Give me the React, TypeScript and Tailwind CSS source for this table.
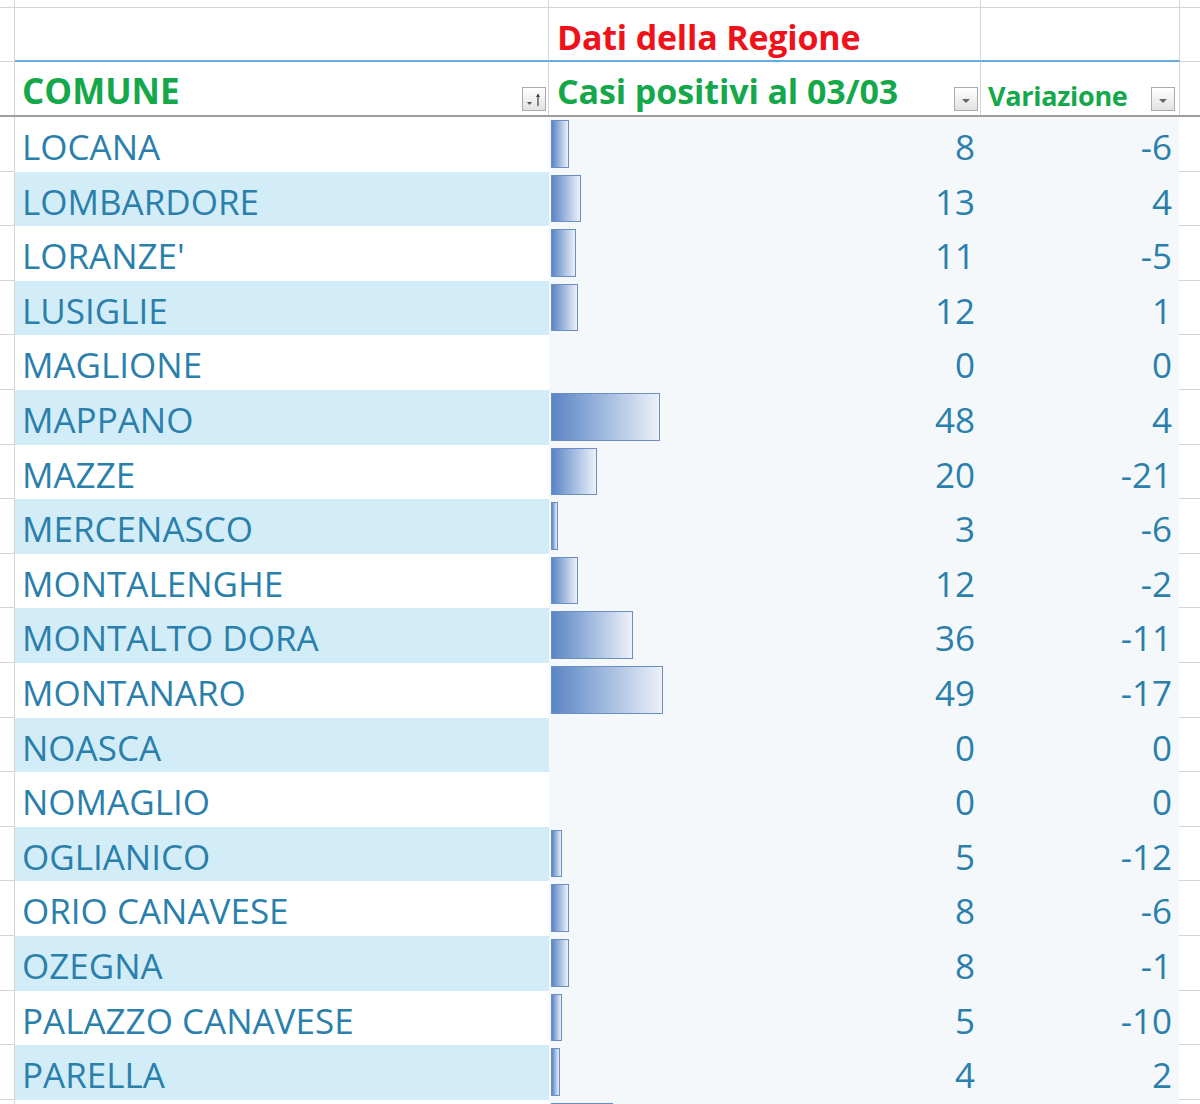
import React from "react";

type Row = [string, number, number];

const rows: Row[] = [
  ["LOCANA", 8, -6],
  ["LOMBARDORE", 13, 4],
  ["LORANZE'", 11, -5],
  ["LUSIGLIE", 12, 1],
  ["MAGLIONE", 0, 0],
  ["MAPPANO", 48, 4],
  ["MAZZE", 20, -21],
  ["MERCENASCO", 3, -6],
  ["MONTALENGHE", 12, -2],
  ["MONTALTO DORA", 36, -11],
  ["MONTANARO", 49, -17],
  ["NOASCA", 0, 0],
  ["NOMAGLIO", 0, 0],
  ["OGLIANICO", 5, -12],
  ["ORIO CANAVESE", 8, -6],
  ["OZEGNA", 8, -1],
  ["PALAZZO CANAVESE", 5, -10],
  ["PARELLA", 4, 2],
];

function FilterBtn({ sort }: { sort?: boolean }) {
  return (
    <div className="w-[24px] h-[24px] border border-[#ababab] bg-linear-to-b from-white to-[#e2e2e2] flex items-center justify-center">
      {sort ? (
        <svg width="22" height="22" viewBox="0 0 22 22">
          <polygon points="4,14 9,14 6.5,17" fill="#555" />
          <line x1="15" y1="6.5" x2="15" y2="18" stroke="#444" strokeWidth="1.2" />
          <polygon points="13,9 15,5.5 17,9" fill="#444" />
        </svg>
      ) : (
        <svg width="22" height="22" viewBox="0 0 22 22">
          <polygon points="7,11 15,11 11,15" fill="#666" />
        </svg>
      )}
    </div>
  );
}

export default function App() {
  return (
    <div className="w-[1200px] h-[1104px] overflow-hidden bg-white font-['Open_Sans',sans-serif] text-[#2a7fab]">
      {/* top partial row */}
      <div className="flex h-[8px]">
        <div className="w-[15px] border-r border-b border-[#d4d4d4]" />
        <div className="w-[534px] border-r border-b border-[#d4d4d4]" />
        <div className="w-[432px] border-r border-b border-[#d4d4d4]" />
        <div className="w-[199px] border-r border-b border-[#d4d4d4]" />
        <div className="flex-1 border-b border-[#d4d4d4]" />
      </div>

      {/* Dati della Regione */}
      <div className="flex h-[54px]">
        <div className="w-[15px] border-r border-b border-[#d4d4d4]" />
        <div className="w-[534px] border-r border-[#d4d4d4] border-b-2 border-b-[#67abdf]" />
        <div className="w-[432px] border-r border-[#d4d4d4] border-b-2 border-b-[#67abdf] pl-[8px] pt-[12px]">
          <div className="text-[34px] leading-none font-bold text-[#f0121a] whitespace-nowrap tracking-[-0.2px]">
            Dati della Regione
          </div>
        </div>
        <div className="w-[199px] border-r border-[#d4d4d4] border-b-2 border-b-[#67abdf]" />
        <div className="flex-1 border-b border-[#d4d4d4]" />
      </div>

      {/* headers */}
      <div className="flex h-[55px] border-b-2 border-[#9e9e9e]">
        <div className="w-[15px] border-r border-[#d4d4d4]" />
        <div className="w-[534px] border-r border-[#d4d4d4] flex justify-between pl-[7px] pr-[2px]">
          <div className="pt-[11px] text-[35px] leading-none font-bold text-[#14a84b]">COMUNE</div>
          <div className="self-end mb-[4px]">
            <FilterBtn sort />
          </div>
        </div>
        <div className="w-[432px] border-r border-[#d4d4d4] flex justify-between pl-[8px] pr-[2px]">
          <div className="pt-[12px] text-[34px] leading-none font-bold text-[#14a84b] whitespace-nowrap tracking-[-0.1px]">
            Casi positivi al 03/03
          </div>
          <div className="self-end mb-[4px]">
            <FilterBtn />
          </div>
        </div>
        <div className="w-[199px] border-r border-[#d4d4d4] flex justify-between pl-[7px] pr-[4px]">
          <div className="pt-[20px] text-[27px] leading-none font-bold text-[#14a84b] tracking-[-0.3px]">
            Variazione
          </div>
          <div className="self-end mb-[4px]">
            <FilterBtn />
          </div>
        </div>
        <div className="flex-1" />
      </div>

      {/* data rows */}
      {rows.map(([name, casi, vari], i) => (
        <div key={name} className="flex h-[54.6px]">
          <div className="w-[15px] border-r border-b border-[#d4d4d4]" />
          <div
            className={
              "w-[534px] pl-[7px] pt-[12px] text-[35px] leading-none whitespace-nowrap " +
              (i % 2 === 1 ? "bg-[#d3edf8]" : "bg-white")
            }
          >
            {name}
          </div>
          <div className="w-[432px] bg-[#f5f8fa] flex pl-[2px] pt-[3px] pb-[4px] pr-[6px]">
            {casi > 0 && (
              <div
                className="h-full border border-[#6a8fc6] bg-linear-to-r from-[#5a85c4] to-[#edf1f8]"
                style={{ width: `${Math.round(casi * 2.28)}px` }}
              />
            )}
            <div className="ml-auto mt-[9px] text-[35px] leading-none">{casi}</div>
          </div>
          <div className="w-[198px] bg-[#f5f8fa] text-right pr-[7px] pt-[12px] text-[35px] leading-none">
            {vari}
          </div>
          <div className="flex-1 border-b border-[#d4d4d4]" />
        </div>
      ))}

      {/* next row, only its top edge is visible */}
      <div className="flex h-[54.6px]">
        <div className="w-[15px] border-r border-b border-[#d4d4d4]" />
        <div className="w-[534px] bg-white" />
        <div className="w-[432px] bg-[#f5f8fa] flex pl-[2px] pt-[3px] pb-[4px]">
          <div
            className="h-full border border-[#6a8fc6] bg-linear-to-r from-[#5a85c4] to-[#edf1f8]"
            style={{ width: "62px" }}
          />
        </div>
        <div className="w-[198px] bg-[#f5f8fa]" />
        <div className="flex-1 border-b border-[#d4d4d4]" />
      </div>
    </div>
  );
}
